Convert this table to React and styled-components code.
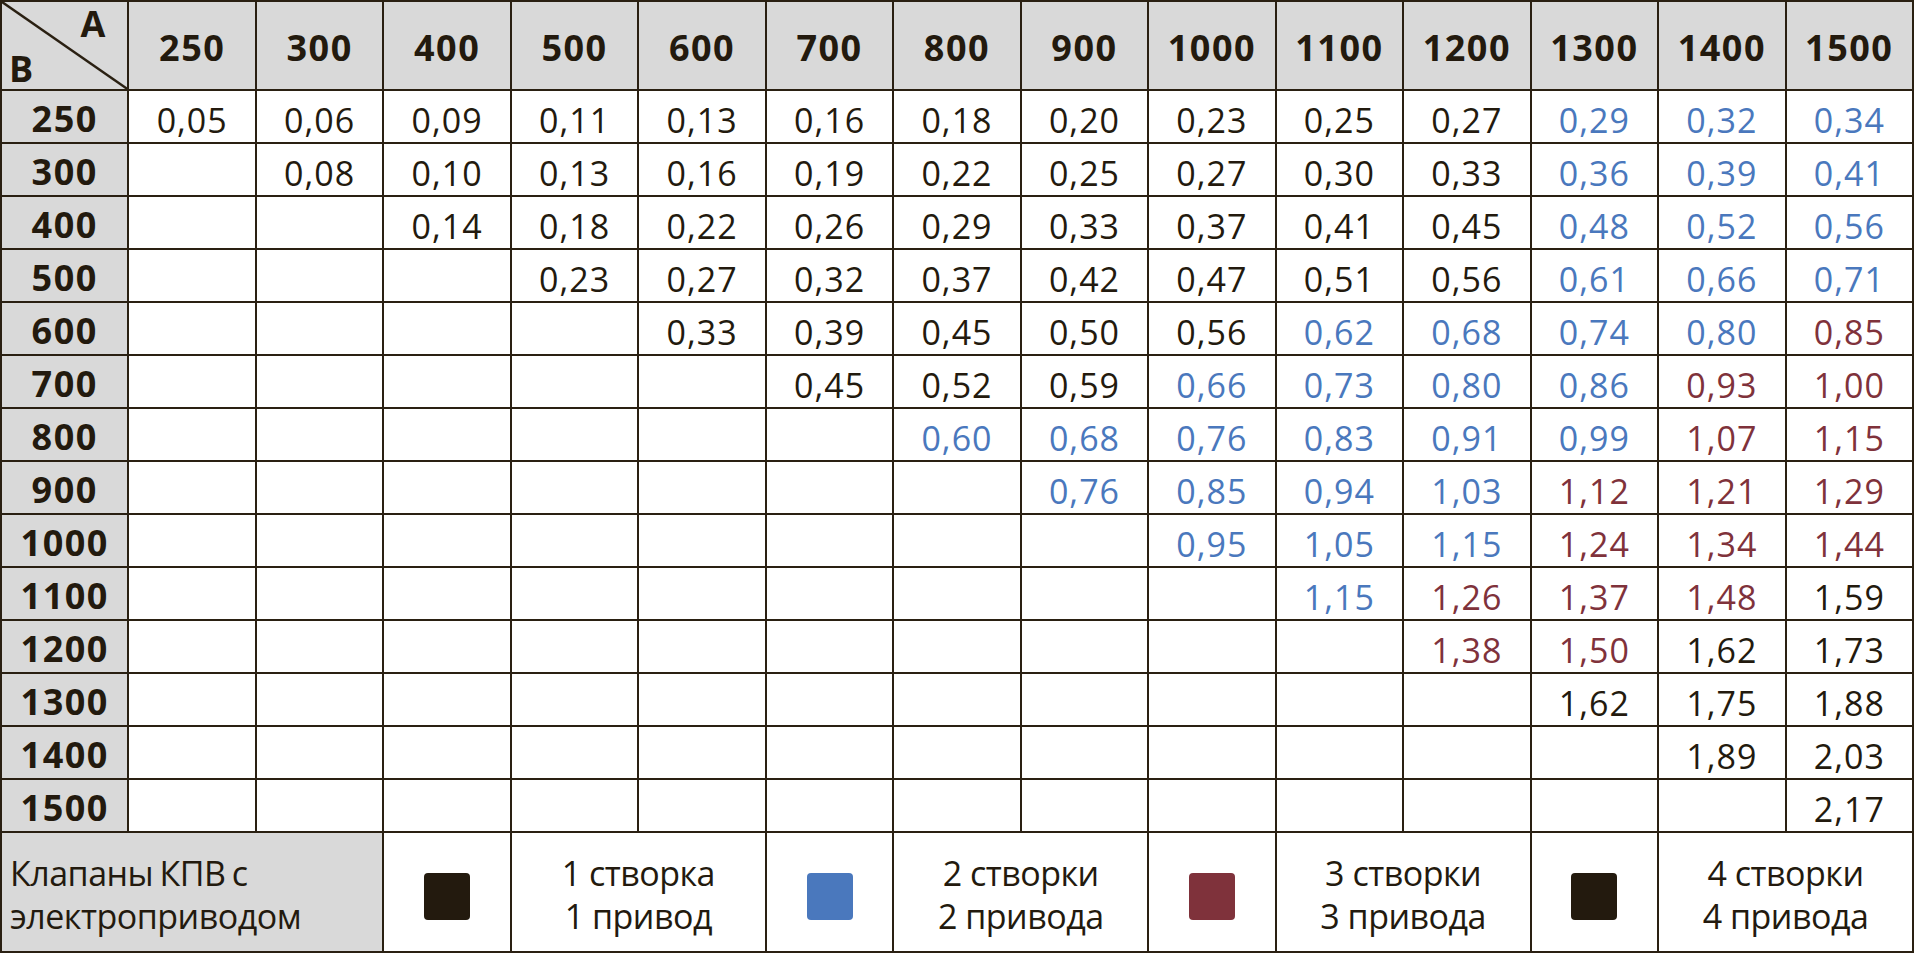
import React from "react";
import styled, { createGlobalStyle } from "styled-components";

const LINE = "#2a2012";
const INK = "#231a0e";
const GRAY = "#d9d9d9";
const COLORS = { k: INK, b: "#4a78bd", m: "#7f323b" };

const Global = createGlobalStyle`
  html, body { margin: 0; padding: 0; background: #fff; }
  body { font-family: "Open Sans", "Noto Sans", sans-serif; color: ${INK}; }
`;

const Table = styled.div`
  width: 1914px;
  box-sizing: border-box;
  display: grid;
  grid-template-columns: repeat(15, 1fr);
  grid-template-rows: 87px repeat(14, 51px) 118px;
  gap: 2px;
  background: ${LINE};
  border: 2px solid ${LINE};
`;

const Cell = styled.div`
  background: ${(p) => (p.$head ? GRAY : "#fff")};
  display: flex;
  align-items: center;
  justify-content: center;
  font-size: ${(p) => (p.$head ? "36px" : "34px")};
  font-weight: ${(p) => (p.$head ? 700 : 400)};
  color: ${(p) => p.$color || INK};
  line-height: 1;
  padding-top: ${(p) => (p.$head ? "4px" : "6px")};
  box-sizing: border-box;
  letter-spacing: ${(p) => (p.$head ? "1.5px" : "1px")};
`;

const Corner = styled.div`
  background: ${GRAY};
  position: relative;
  display: flex;
  flex-direction: column;
  justify-content: space-between;
  padding: 4px 22px 0 7px;
  font-weight: 700;
  font-size: 36px;
  line-height: 1;
`;

const Diagonal = styled.svg`
  position: absolute;
  inset: 0;
  width: 100%;
  height: 100%;
`;

const CornerA = styled.span`
  align-self: flex-end;
`;

const CornerB = styled.span`
  align-self: flex-start;
  margin-bottom: 2px;
`;

const LegendTitle = styled.div`
  grid-column: span 3;
  background: ${GRAY};
  display: flex;
  align-items: center;
  padding: 6px 0 0 8px;
  font-size: 34px;
  line-height: 43px;
  letter-spacing: -0.5px;
  word-spacing: -2px;
`;

const SwatchCell = styled.div`
  background: #fff;
  display: flex;
  align-items: center;
  justify-content: center;
  padding-top: 8px;
`;

const Swatch = styled.div`
  width: 46px;
  height: 47px;
  border-radius: 4px;
  background: ${(p) => p.$color};
`;

const LegendText = styled.div`
  grid-column: span 2;
  background: #fff;
  display: flex;
  align-items: center;
  justify-content: center;
  text-align: center;
  padding-top: 6px;
  font-size: 34px;
  line-height: 43px;
  letter-spacing: -0.5px;
`;

const cols = [250, 300, 400, 500, 600, 700, 800, 900, 1000, 1100, 1200, 1300, 1400, 1500];

// each row: [B, number of empty cells, values; suffix b = blue, m = maroon]
const rows = [
  [250, 0, "0,05 0,06 0,09 0,11 0,13 0,16 0,18 0,20 0,23 0,25 0,27 0,29b 0,32b 0,34b"],
  [300, 1, "0,08 0,10 0,13 0,16 0,19 0,22 0,25 0,27 0,30 0,33 0,36b 0,39b 0,41b"],
  [400, 2, "0,14 0,18 0,22 0,26 0,29 0,33 0,37 0,41 0,45 0,48b 0,52b 0,56b"],
  [500, 3, "0,23 0,27 0,32 0,37 0,42 0,47 0,51 0,56 0,61b 0,66b 0,71b"],
  [600, 4, "0,33 0,39 0,45 0,50 0,56 0,62b 0,68b 0,74b 0,80b 0,85m"],
  [700, 5, "0,45 0,52 0,59 0,66b 0,73b 0,80b 0,86b 0,93m 1,00m"],
  [800, 6, "0,60b 0,68b 0,76b 0,83b 0,91b 0,99b 1,07m 1,15m"],
  [900, 7, "0,76b 0,85b 0,94b 1,03b 1,12m 1,21m 1,29m"],
  [1000, 8, "0,95b 1,05b 1,15b 1,24m 1,34m 1,44m"],
  [1100, 9, "1,15b 1,26m 1,37m 1,48m 1,59"],
  [1200, 10, "1,38m 1,50m 1,62 1,73"],
  [1300, 11, "1,62 1,75 1,88"],
  [1400, 12, "1,89 2,03"],
  [1500, 13, "2,17"],
];

const legend = [
  { color: COLORS.k, l1: "1 створка", l2: "1 привод" },
  { color: COLORS.b, l1: "2 створки", l2: "2 привода" },
  { color: COLORS.m, l1: "3 створки", l2: "3 привода" },
  { color: COLORS.k, l1: "4 створки", l2: "4 привода" },
];

export default function App() {
  return (
    <>
      <Global />
      <Table>
        <Corner>
          <Diagonal viewBox="0 0 100 100" preserveAspectRatio="none">
            <line x1="0" y1="0" x2="100" y2="100" stroke={LINE} strokeWidth="2.5" vectorEffect="non-scaling-stroke" />
          </Diagonal>
          <CornerA>A</CornerA>
          <CornerB>B</CornerB>
        </Corner>
        {cols.map((c) => (
          <Cell key={"h" + c} $head>
            {c}
          </Cell>
        ))}
        {rows.map(([b, off, vals]) => {
          const items = vals.split(" ");
          return (
            <React.Fragment key={"r" + b}>
              <Cell $head>{b}</Cell>
              {Array.from({ length: off }).map((_, i) => (
                <Cell key={"e" + i} />
              ))}
              {items.map((v, i) => {
                const last = v[v.length - 1];
                const tag = last === "b" || last === "m" ? last : "k";
                const text = tag === "k" ? v : v.slice(0, -1);
                return (
                  <Cell key={"v" + i} $color={COLORS[tag]}>
                    {text}
                  </Cell>
                );
              })}
            </React.Fragment>
          );
        })}
        <LegendTitle>
          <div>
            Клапаны КПВ с
            <br />
            электроприводом
          </div>
        </LegendTitle>
        {legend.map((l, i) => (
          <React.Fragment key={"l" + i}>
            <SwatchCell>
              <Swatch $color={l.color} />
            </SwatchCell>
            <LegendText>
              <div>
                {l.l1}
                <br />
                {l.l2}
              </div>
            </LegendText>
          </React.Fragment>
        ))}
      </Table>
    </>
  );
}
